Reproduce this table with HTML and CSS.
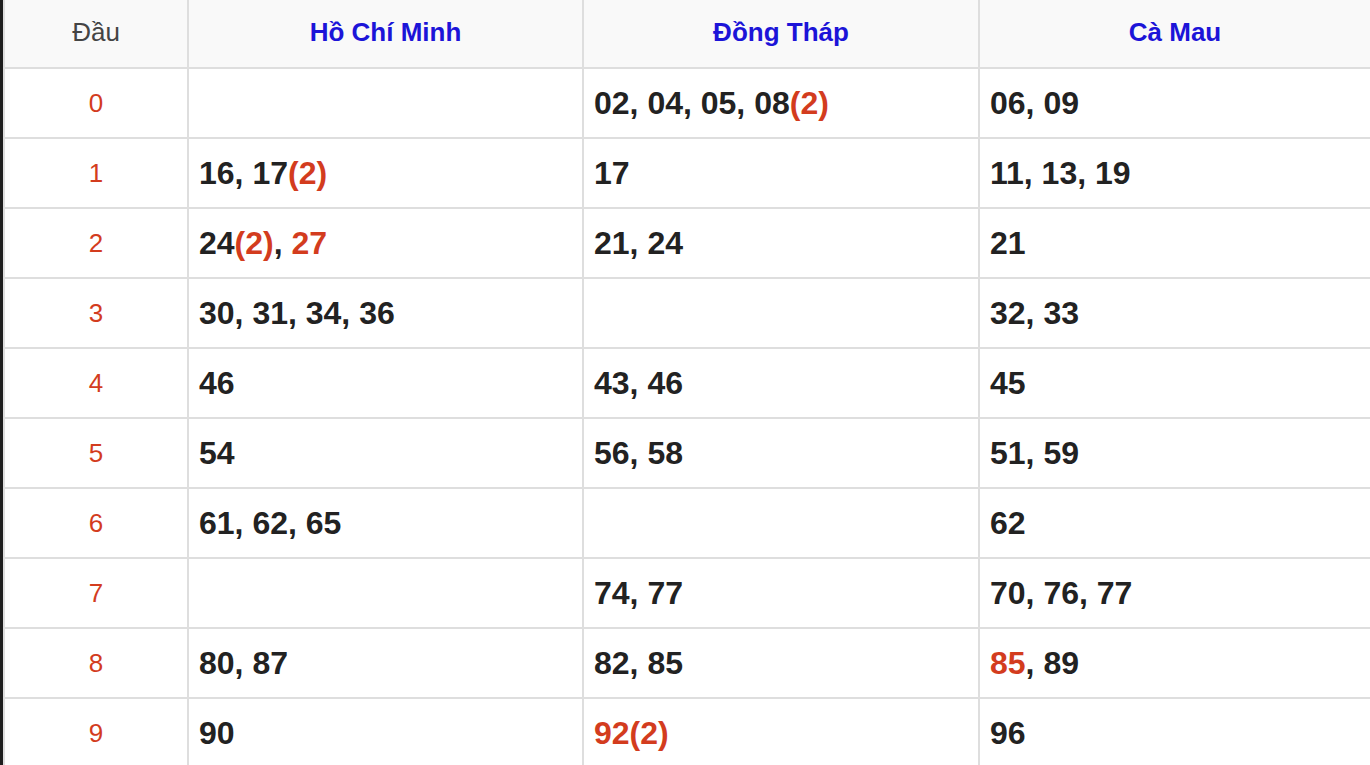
FILE: index.html
```html
<!DOCTYPE html>
<html lang="vi">
<head>
<meta charset="utf-8">
<title>Thống kê Đầu</title>
<link rel="stylesheet" href="styles.css">
</head>
<body>
<div class="frame">
<table class="kq">
  <colgroup>
    <col class="c-dau">
    <col class="c-prov">
    <col class="c-prov c-prov3">
    <col class="c-last">
  </colgroup>
  <thead>
    <tr>
      <th class="h-dau">Đầu</th>
      <th class="h-prov">Hồ Chí Minh</th>
      <th class="h-prov">Đồng Tháp</th>
      <th class="h-prov">Cà Mau</th>
    </tr>
  </thead>
  <tbody>
    <tr><td class="dau">0</td><td></td><td>02, 04, 05, 08<span class="red">(2)</span></td><td>06, 09</td></tr>
    <tr><td class="dau">1</td><td>16, 17<span class="red">(2)</span></td><td>17</td><td>11, 13, 19</td></tr>
    <tr><td class="dau">2</td><td>24<span class="red">(2)</span>, <span class="red">27</span></td><td>21, 24</td><td>21</td></tr>
    <tr><td class="dau">3</td><td>30, 31, 34, 36</td><td></td><td>32, 33</td></tr>
    <tr><td class="dau">4</td><td>46</td><td>43, 46</td><td>45</td></tr>
    <tr><td class="dau">5</td><td>54</td><td>56, 58</td><td>51, 59</td></tr>
    <tr><td class="dau">6</td><td>61, 62, 65</td><td></td><td>62</td></tr>
    <tr><td class="dau">7</td><td></td><td>74, 77</td><td>70, 76, 77</td></tr>
    <tr><td class="dau">8</td><td>80, 87</td><td>82, 85</td><td><span class="red">85</span>, 89</td></tr>
    <tr><td class="dau">9</td><td>90</td><td><span class="red">92(2)</span></td><td>96</td></tr>
  </tbody>
</table>
</div>
</body>
</html>
```
FILE: styles.css
```css
html, body {
  margin: 0;
  padding: 0;
  height: 100%;
  overflow: hidden;
}
body {
  background: #1e1e1e;
  font-family: "Liberation Sans", Arial, Helvetica, sans-serif;
}
.frame {
  margin-left: 3px;
  background: #fff;
  min-height: 100%;
  width: 1369px;
}
.kq {
  border-collapse: separate;
  border-spacing: 0;
  table-layout: fixed;
  width: 1369px;
  border-left: 2px solid #dedede;
}
.c-dau { width: 184px; }
.c-prov { width: 395px; }
.c-prov3 { width: 396px; }
.kq th, .kq td {
  box-sizing: border-box;
  border-right: 2px solid #dedede;
  border-bottom: 2px solid #dedede;
  padding: 0 10px;
  vertical-align: middle;
  white-space: nowrap;
}
.kq th {
  height: 69px;
  padding-bottom: 2px;
  background: #f9f9f9;
  font-size: 26px;
  text-align: center;
}
.h-dau {
  font-weight: normal;
  color: #444;
}
.h-prov {
  font-weight: bold;
  color: #1c14d8;
}
.kq td {
  height: 70px;
  font-size: 32px;
  font-weight: bold;
  color: #222;
  text-align: left;
}
.kq td.dau {
  text-align: center;
  font-size: 26px;
  font-weight: normal;
  color: #d33c1e;
}
.red {
  color: #d33c1e;
}
```
